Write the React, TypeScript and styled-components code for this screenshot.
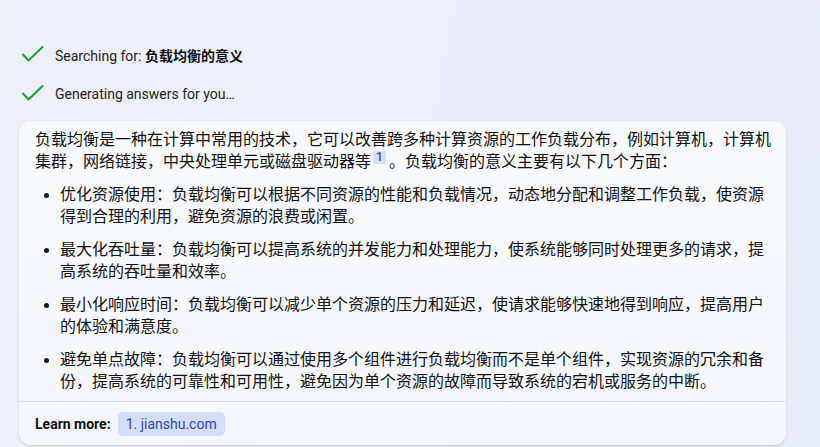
import React from "react";
import styled, { createGlobalStyle } from "styled-components";

const Global = createGlobalStyle`
  html, body { margin: 0; padding: 0; }
  body {
    width: 820px;
    height: 447px;
    overflow: hidden;
    background: linear-gradient(100deg, #eef0f8 0%, #eceef9 60%, #e7ebf7 100%);
    font-family: Roboto, "Noto Sans CJK SC", sans-serif;
    color: #111;
  }
`;

const Page = styled.div`
  padding: 44px 34px 0 19px;
  display: flex;
  flex-direction: column;
`;

const StatusList = styled.div`
  display: flex;
  flex-direction: column;
  gap: 17px;
  padding-left: 3px;
`;

const StatusRow = styled.div`
  display: flex;
  align-items: center;
  gap: 11px;
  height: 22px;
  font-size: 14px;
  color: #1f1f1f;
`;

const Strong = styled.b`
  font-weight: 700;
  color: #111;
`;

const Card = styled.div`
  margin-top: 16px;
  width: 767px;
  border-radius: 12px;
  background: linear-gradient(180deg, #f9fafe 0%, #f4f6fc 100%);
  box-shadow: 0 1px 2px rgba(60, 64, 90, 0.22);
  overflow: hidden;
`;

const Body = styled.div`
  padding: 8px 15px 8px 16px;
  font-size: 16px;
  line-height: 22px;
`;

const Para = styled.p`
  margin: 0;
`;

const Cite = styled.sup`
  display: inline-block;
  width: 13px;
  height: 13px;
  line-height: 13px;
  margin: 0 3px 0 2px;
  border-radius: 3px;
  background: #d4ddf9;
  color: #2f4ccc;
  font-size: 12px;
  font-weight: 500;
  text-align: center;
  vertical-align: 6px;
`;

const List = styled.ul`
  margin: 11px 0 0;
  padding: 0 0 0 25px;
  list-style: none;
`;

const Item = styled.li`
  position: relative;
  & + & { margin-top: 11px; }
  &::before {
    content: "";
    position: absolute;
    left: -16px;
    top: 9px;
    width: 5px;
    height: 5px;
    border-radius: 50%;
    background: #1a1a1a;
  }
`;

const Footer = styled.div`
  border-top: 1px solid #dcdee5;
  padding: 10px 16px 9px;
  display: flex;
  align-items: center;
  gap: 7px;
  font-size: 14px;
`;

const Label = styled.span`
  font-weight: 700;
  color: #111;
`;

const Chip = styled.span`
  display: inline-flex;
  align-items: center;
  height: 24px;
  padding: 0 8px;
  border-radius: 5px;
  background: #d4ddf9;
  color: #3446b0;
`;

const Check = () => (
  <svg width="22" height="22" viewBox="0 0 22 22" fill="none">
    <polyline
      points="1,10.5 6.5,16.5 20.5,3"
      stroke="#1f9e38"
      strokeWidth="2"
      strokeLinecap="round"
      strokeLinejoin="round"
    />
  </svg>
);

const items = [
  "优化资源使用：负载均衡可以根据不同资源的性能和负载情况，动态地分配和调整工作负载，使资源得到合理的利用，避免资源的浪费或闲置。",
  "最大化吞吐量：负载均衡可以提高系统的并发能力和处理能力，使系统能够同时处理更多的请求，提高系统的吞吐量和效率。",
  "最小化响应时间：负载均衡可以减少单个资源的压力和延迟，使请求能够快速地得到响应，提高用户的体验和满意度。",
  "避免单点故障：负载均衡可以通过使用多个组件进行负载均衡而不是单个组件，实现资源的冗余和备份，提高系统的可靠性和可用性，避免因为单个资源的故障而导致系统的宕机或服务的中断。",
];

export default function App() {
  return (
    <>
      <Global />
      <Page>
        <StatusList>
          <StatusRow>
            <Check />
            <span>
              Searching for: <Strong>负载均衡的意义</Strong>
            </span>
          </StatusRow>
          <StatusRow>
            <Check />
            <span>Generating answers for you…</span>
          </StatusRow>
        </StatusList>
        <Card>
          <Body>
            <Para>
              负载均衡是一种在计算中常用的技术，它可以改善跨多种计算资源的工作负载分布，例如计算机，计算机集群，网络链接，中央处理单元或磁盘驱动器等
              <Cite>1</Cite>。负载均衡的意义主要有以下几个方面：
            </Para>
            <List>
              {items.map((t) => (
                <Item key={t}>{t}</Item>
              ))}
            </List>
          </Body>
          <Footer>
            <Label>Learn more:</Label>
            <Chip>1. jianshu.com</Chip>
          </Footer>
        </Card>
      </Page>
    </>
  );
}
